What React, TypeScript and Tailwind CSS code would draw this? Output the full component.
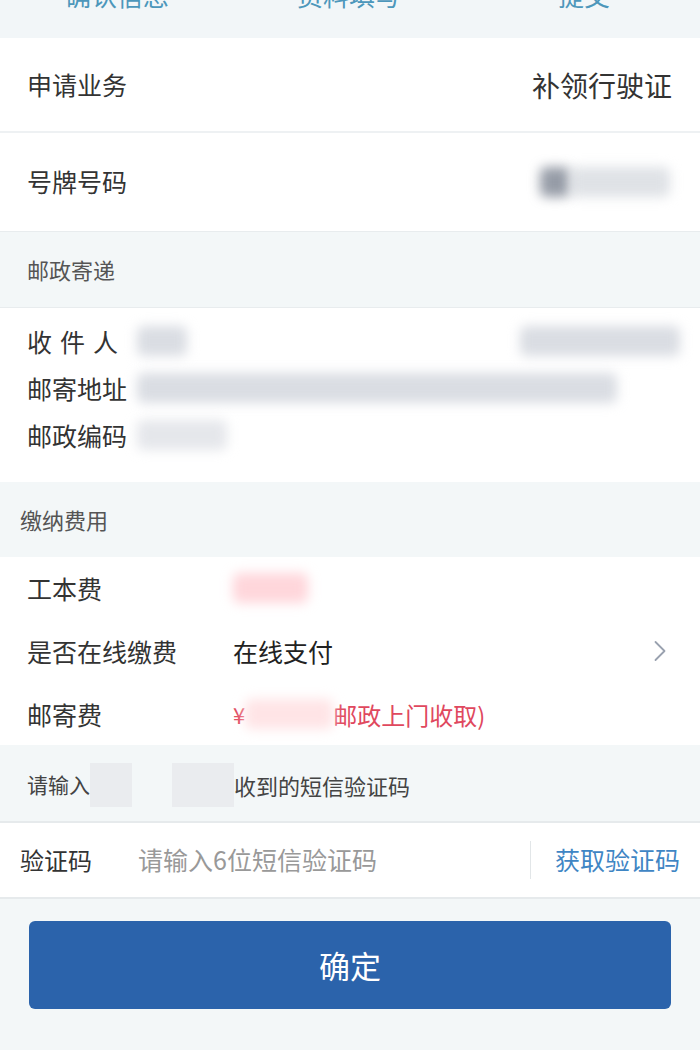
import { ChevronRight } from "lucide-react";

const font = "font-['Noto_Sans_CJK_SC','Noto_Sans',sans-serif]";

function Blur(props: { w: string; tone?: string }) {
  return (
    <span
      className={`inline-block h-[30px] rounded-md blur-[6px] ${props.w} ${props.tone ?? "bg-gray-300/80"}`}
    />
  );
}

export default function App() {
  return (
    <div className={`${font} flex h-[1050px] w-[700px] flex-col overflow-hidden bg-[#f3f7f8] text-[#333]`}>
      {/* step tabs, cut off at top */}
      <div className="flex h-[38px] shrink-0 items-end overflow-hidden bg-[#f2f6f8] text-[26px] leading-none text-[#4d97bb]">
        <span className="mb-[30px] ml-[65px]">确认信息</span>
        <span className="mb-[30px] ml-[128px]">资料填写</span>
        <span className="mb-[30px] ml-[157px]">提交</span>
      </div>

      <div className="flex h-[95px] shrink-0 items-center justify-between border-b-2 border-[#eef1f3] bg-white pl-[27px] pr-[28px]">
        <span className="text-[25px]">申请业务</span>
        <span className="text-[28px]">补领行驶证</span>
      </div>
      <div className="flex h-[99px] shrink-0 items-center justify-between border-b border-[#e8ecee] bg-white pl-[27px] pr-[30px]">
        <span className="text-[25px]">号牌号码</span>
        <span className="flex items-center">
          <Blur w="w-[30px]" tone="bg-gray-500/70" />
          <Blur w="w-[100px]" tone="bg-gray-300/70" />
        </span>
      </div>

      <div className="flex h-[76px] shrink-0 items-center border-b border-[#e8ecee] pl-[27px] text-[22px] text-[#555]">
        邮政寄递
      </div>

      <div className="flex h-[174px] shrink-0 flex-col justify-center gap-[10px] bg-white pl-[27px] pr-[20px] pb-[14px] text-[25px] leading-[37px]">
        <div className="flex items-center">
          <span className="w-[110px] tracking-[8px]">收件人</span>
          <Blur w="w-[50px]" />
          <span className="flex-1" />
          <Blur w="w-[160px]" />
        </div>
        <div className="flex items-center">
          <span className="w-[110px]">邮寄地址</span>
          <Blur w="w-[480px]" />
        </div>
        <div className="flex items-center">
          <span className="w-[110px]">邮政编码</span>
          <Blur w="w-[90px]" tone="bg-gray-200" />
        </div>
      </div>

      <div className="flex h-[75px] shrink-0 items-center pl-[20px] text-[22px] text-[#555]">
        缴纳费用
      </div>

      <div className="flex h-[188px] shrink-0 flex-col justify-center bg-white pl-[27px] pr-[22px] text-[25px] leading-[63px]">
        <div className="flex items-center">
          <span className="w-[206px]">工本费</span>
          <Blur w="w-[75px]" tone="bg-rose-200/80" />
        </div>
        <div className="flex items-center">
          <span className="w-[206px]">是否在线缴费</span>
          <span className="flex-1 text-[25px] text-[#222]">在线支付</span>
          <ChevronRight className="h-[36px] w-[36px] text-gray-400" strokeWidth={1.2} />
        </div>
        <div className="flex items-center">
          <span className="w-[206px]">邮寄费</span>
          <span className="text-[22px] text-[#e0485e]">¥</span>
          <Blur w="w-[88px]" tone="bg-rose-100" />
          <span className="text-[24px] text-[#e0485e]">邮政上门收取)</span>
        </div>
      </div>

      <div className="flex h-[78px] shrink-0 items-center border-b-2 border-[#e6eaec] pl-[27px] pt-[4px] text-[21px] text-[#444]">
        <span>请输入</span>
        <span className="inline-block h-[44px] w-[42px] bg-gray-200/70" />
        <span className="inline-block h-[44px] w-[40px]" />
        <span className="inline-block h-[44px] w-[62px] bg-gray-200/70" />
        <span className="text-[22px]">收到的短信验证码</span>
      </div>

      <div className="flex h-[76px] shrink-0 items-center border-b-2 border-[#e6eaec] bg-white pl-[20px] pr-[20px]">
        <span className="w-[118px] text-[24px]">验证码</span>
        <span className="flex-1 text-[25px] text-[#999]">请输入6位短信验证码</span>
        <span className="mr-[24px] h-[38px] w-px bg-[#e2e6e8]" />
        <span className="text-[25px] text-[#3f86c4]">获取验证码</span>
      </div>

      <div className="px-[29px] pt-[22px]">
        <button className="flex h-[88px] w-full items-center justify-center rounded-[6px] bg-[#2b63ab] text-[31px] text-white">
          确定
        </button>
      </div>
    </div>
  );
}
